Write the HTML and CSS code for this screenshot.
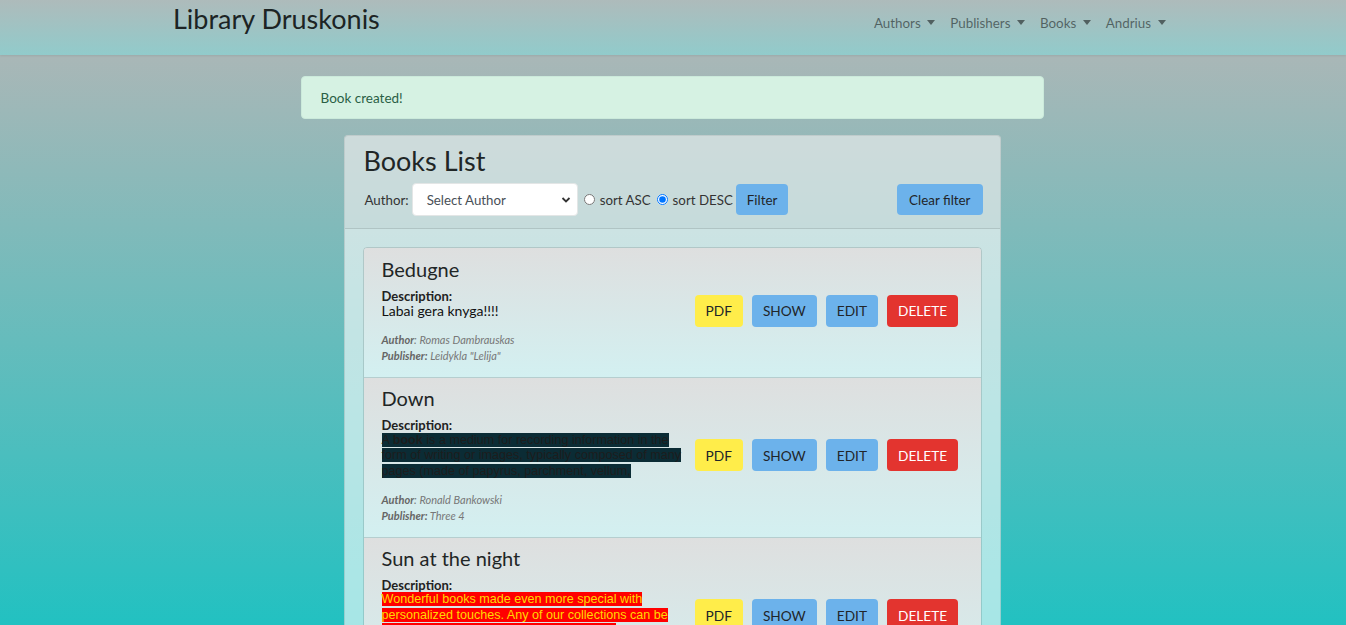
FILE: index.html
```html
<!DOCTYPE html>
<html lang="en">
<head>
<meta charset="utf-8">
<title>Library Druskonis</title>
<link rel="stylesheet" href="styles.css">
</head>
<body>
<nav class="navbar">
  <div class="nav-inner">
    <a class="brand" href="#">Library Druskonis</a>
    <ul class="nav-links">
      <li><a href="#">Authors <span class="caret"></span></a></li>
      <li><a href="#">Publishers <span class="caret"></span></a></li>
      <li><a href="#">Books <span class="caret"></span></a></li>
      <li><a href="#">Andrius <span class="caret"></span></a></li>
    </ul>
  </div>
</nav>
<main class="main">
  <div class="alert">Book created!</div>
  <section class="card">
    <header class="card-header">
      <h3 class="card-title">Books List</h3>
      <form class="filter-row">
        <label class="lbl">Author:</label>
        <div class="select"><span>Select Author</span>
          <svg class="chev" width="10" height="8" viewBox="0 0 10 8"><path d="M1.5 2 L5 5.5 L8.5 2" fill="none" stroke="#333" stroke-width="1.8"/></svg>
        </div>
        <label class="radio"><input type="radio" name="sort"> sort ASC</label>
        <label class="radio"><input type="radio" name="sort" checked> sort DESC</label>
        <button type="button" class="btn btn-info">Filter</button>
        <button type="button" class="btn btn-info push">Clear filter</button>
      </form>
    </header>
    <div class="card-body">
      <ul class="list">
        <li class="item">
          <div class="info">
            <h4 class="title">Bedugne</h4>
            <div class="desc-label">Description:</div>
            <div class="desc">Labai gera knyga!!!!</div>
            <div class="meta"><b>Author</b>: Romas Dambrauskas</div>
            <div class="meta"><b>Publisher:</b> Leidykla "Lelija"</div>
          </div>
          <div class="actions">
            <a class="btn btn-yellow">PDF</a>
            <a class="btn btn-info">SHOW</a>
            <a class="btn btn-info">EDIT</a>
            <a class="btn btn-red">DELETE</a>
          </div>
        </li>
        <li class="item">
          <div class="info">
            <h4 class="title">Down</h4>
            <div class="desc-label">Description:</div>
            <p class="pasted"><span class="dark">A <b>book</b> is a medium for recording information in the form of writing or images, typically composed of many pages (made of papyrus, parchment, vellum,</span></p>
            <div class="meta"><b>Author</b>: Ronald Bankowski</div>
            <div class="meta"><b>Publisher:</b> Three 4</div>
          </div>
          <div class="actions">
            <a class="btn btn-yellow">PDF</a>
            <a class="btn btn-info">SHOW</a>
            <a class="btn btn-info">EDIT</a>
            <a class="btn btn-red">DELETE</a>
          </div>
        </li>
        <li class="item">
          <div class="info">
            <h4 class="title">Sun at the night</h4>
            <div class="desc-label">Description:</div>
            <p class="pasted pasted-red"><span class="red">Wonderful books made even more special with personalized touches. Any of our collections can be customized as a gift with the child's name.</span></p>
            <div class="meta"><b>Author</b>: Romas Dambrauskas</div>
            <div class="meta"><b>Publisher:</b> Three 4</div>
          </div>
          <div class="actions">
            <a class="btn btn-yellow">PDF</a>
            <a class="btn btn-info">SHOW</a>
            <a class="btn btn-info">EDIT</a>
            <a class="btn btn-red">DELETE</a>
          </div>
        </li>
      </ul>
    </div>
  </section>
</main>
</body>
</html>
```
FILE: styles.css
```css
* { box-sizing: border-box; }
html, body { margin: 0; padding: 0; }
body {
  font-family: Lato, "Open Sans", sans-serif;
  font-size: 14px;
  color: #212529;
  min-height: 100vh;
  background: linear-gradient(to bottom, #adb7b7 0%, #a9b7b7 9%, #22c1c1 100%) fixed;
}
.navbar {
  height: 55px;
  background: linear-gradient(to bottom, #aebbbb, #91cbcb);
  box-shadow: 0 1px 2px rgba(0,0,0,.08);
}
.nav-inner {
  width: 1000px;
  margin: 0 auto;
  display: flex;
  align-items: flex-start;
  justify-content: space-between;
}
.brand {
  color: #1c2424;
  text-decoration: none;
  font-size: 27px;
  line-height: 32px;
  padding-top: 3px;
}
.nav-links {
  list-style: none;
  margin: 0;
  padding: 13px 0 0;
  display: flex;
}
.nav-links a {
  display: block;
  padding: 0 7.5px;
  font-size: 13.4px;
  line-height: 20px;
  color: rgba(0,0,0,.5);
  text-decoration: none;
}
.caret {
  display: inline-block;
  margin-left: 3px;
  vertical-align: 3px;
  border-top: 5px solid rgba(0,0,0,.5);
  border-left: 4px solid transparent;
  border-right: 4px solid transparent;
}
.main {
  display: flex;
  flex-direction: column;
  align-items: center;
  padding: 21px 2px 0 0;
}
.alert {
  width: 743px;
  height: 43px;
  padding: 0 19px;
  display: flex;
  align-items: center;
  background: #d6f2e3;
  border: 1px solid #cbeadb;
  border-radius: 4px;
  color: #2a5f45;
  font-size: 13.5px;
}
.card {
  width: 657px;
  margin-top: 16px;
  border: 1px solid rgba(0,0,0,.1);
  border-radius: 4px;
  background: rgba(255,255,255,.6);
}
.card-header {
  padding: 8px 17px 12px 19px;
  background: rgba(0,0,0,.03);
  border-bottom: 1px solid rgba(0,0,0,.1);
}
.card-title {
  margin: 0 0 5px;
  font-weight: 400;
  font-size: 27px;
  line-height: 34px;
  color: #1f2626;
}
.filter-row {
  display: flex;
  align-items: center;
  font-size: 13.3px;
  color: #333;
}
.lbl { padding-left: 1px; }
.select {
  margin-left: 3px;
  width: 166px;
  height: 33px;
  background: #fff;
  border: 1px solid #e3e6e6;
  border-radius: 4px;
  display: flex;
  align-items: center;
  justify-content: space-between;
  padding: 0 6px 0 14px;
  color: #495057;
}
.radio { display: flex; align-items: center; }
.radio input { margin: 0 5px 0 6px; width: 11px; height: 11px; }
.btn {
  display: inline-flex;
  align-items: center;
  justify-content: center;
  height: 32px;
  padding: 0 11px;
  border: 0;
  border-radius: 4px;
  font: inherit;
  font-size: 13.7px;
  color: #212529;
  text-decoration: none;
  cursor: pointer;
}
.filter-row .btn { height: 31px; margin-left: 3px; font-size: 13.4px; }
.filter-row .push { margin-left: auto; padding: 0 12px; }
.btn-info { background: #6cb2eb; }
.btn-yellow { background: #ffed4a; }
.btn-red { background: #e3342f; color: #fff; }
.card-body { padding: 18px; }
.list {
  list-style: none;
  margin: 0;
  padding: 0;
  border: 1px solid rgba(0,0,0,.12);
  border-radius: 4px;
  overflow: hidden;
}
.item {
  display: flex;
  align-items: center;
  padding: 9px 18px 13px;
  background: linear-gradient(to bottom, #dedfdf, #d3f0f1);
}
.item + .item { padding-top: 8px; border-top: 1px solid rgba(0,0,0,.14); }
.info { width: 313px; flex: none; }
.title {
  margin: 0 0 8px;
  font-weight: 400;
  font-size: 20px;
  line-height: 24px;
  color: #1f2626;
}
.desc-label { font-weight: 700; font-size: 13px; line-height: 15px; color: #222; }
.desc { font-size: 14px; line-height: 15px; color: #111; margin-top: -1px; margin-bottom: 1px; }
.pasted {
  margin: 0;
  width: 306px;
  font-family: "Liberation Sans", Arial, sans-serif;
  font-size: 12.6px;
  line-height: 15.4px;
}
.pasted-red { line-height: 15.6px; margin-top: -1px; }
.dark { background: #0b2c35; color: #1d1d1d; }
.red { background: #ff0000; color: #ffd800; }
.meta {
  font-style: italic;
  font-size: 11px;
  line-height: 16px;
  color: #777;
}
.meta b { color: #666; }
.desc + .meta { margin-top: 14px; }
.pasted + .meta { margin-top: 13px; }
.actions {
  display: flex;
  gap: 9px;
}
```
